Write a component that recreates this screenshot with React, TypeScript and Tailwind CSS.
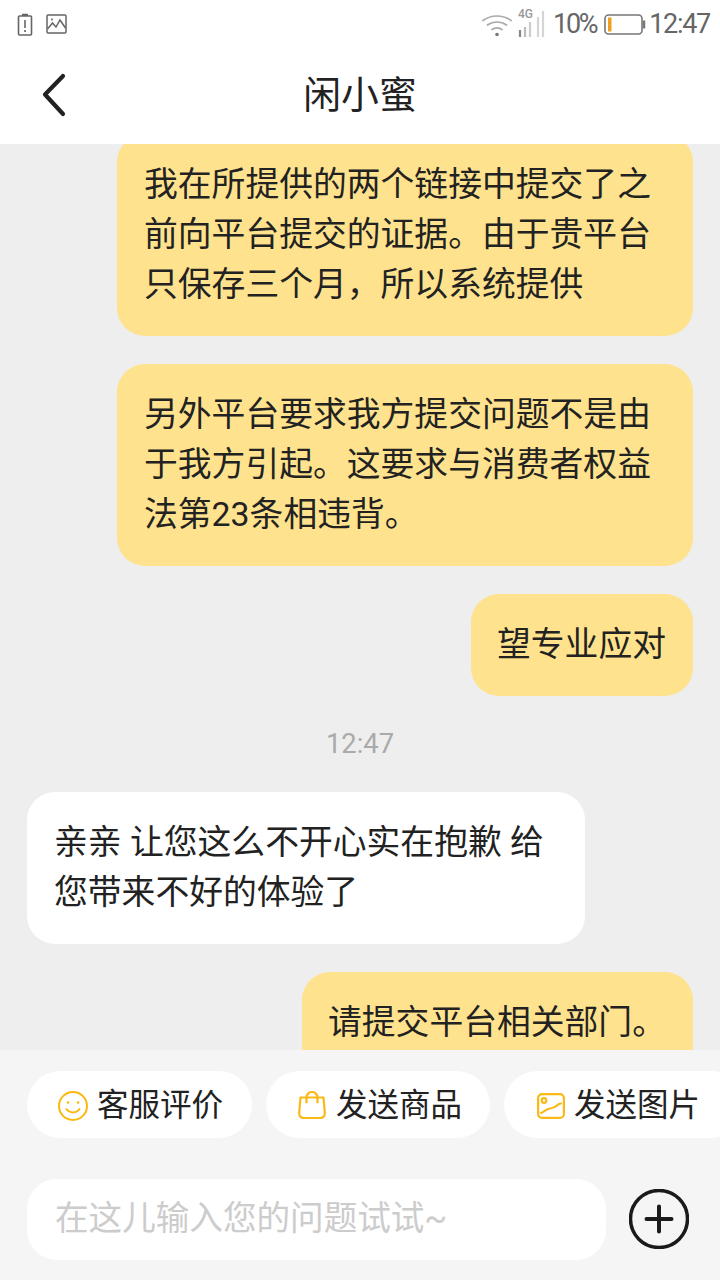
import React from "react";

const font = { fontFamily: 'Roboto, "Noto Sans CJK SC", sans-serif' };

function Mine({ lines, className }: { lines: string[]; className: string }) {
  return (
    <div className="flex justify-end pr-[27px]">
      <div className={"rounded-[28px] bg-[#ffe28d] py-[26px] text-[33.8px] leading-[50px] text-[#222222] " + className}>
        {lines.map((l) => (
          <div key={l} className="whitespace-nowrap">{l}</div>
        ))}
      </div>
    </div>
  );
}

function Chip({ icon, label, className }: { icon: React.ReactNode; label: string; className: string }) {
  return (
    <div className={"flex h-[67px] shrink-0 items-center rounded-[34px] bg-white pt-[2px] text-[31.5px] text-[#222222] " + className}>
      {icon}
      <span className="whitespace-nowrap">{label}</span>
    </div>
  );
}

export default function App() {
  return (
    <div className="flex h-[1280px] w-[720px] flex-col overflow-hidden bg-[#eeeeee]" style={font}>
      <div className="relative z-10 shrink-0 bg-white">
        <div className="flex h-[48px] items-center justify-between pl-[17px] pr-[10px]">
          <div className="flex items-center gap-[13px]">
            <svg width="16" height="23" viewBox="0 0 16 23" fill="none" stroke="#666" strokeWidth="1.6">
              <path d="M5 1.500h6M2.500 3h11a1 1 0 0 1 1 1v17a1 1 0 0 1-1 1h-11a1 1 0 0 1-1-1V4a1 1 0 0 1 1-1z" />
              <path d="M8 7v8M8 17v2" />
            </svg>
            <svg width="21" height="20" viewBox="0 0 21 20" fill="none" stroke="#666" strokeWidth="1.5">
              <rect x="1" y="1" width="19" height="18" rx="1" />
              <path d="M1.500 15l5-6 3.500 4 4-7 5.500 8" />
              <circle cx="6" cy="5.500" r="1" fill="#666" stroke="none" />
            </svg>
          </div>
          <div className="flex items-center text-[27px] leading-none tracking-[-1.300px] text-[#666666]">
            <svg width="30" height="23" viewBox="0 0 30 23" fill="none" stroke="#aaa" strokeWidth="1.7" strokeLinecap="round" className="mr-[6px] mt-[2px]">
              <path d="M1 6.500C9 .5 21 .5 29 6.500" />
              <path d="M5.500 11C11 7 19 7 24.500 11" />
              <path d="M10 15.500c3-2 7-2 10 0" />
              <circle cx="15" cy="20.500" r="1.800" fill="#777" stroke="none" />
            </svg>
            <div className="relative mr-[7px] h-[26px] w-[28px]">
              <span className="absolute left-0 top-[-3px] text-[12px] font-medium tracking-normal text-[#999999]">4G</span>
              <svg width="28" height="26" viewBox="0 0 28 26" fill="none" strokeWidth="2.200" className="absolute left-0 top-0">
                <path d="M2 26v-7" stroke="#888" />
                <path d="M7 26V16" stroke="#bbb" />
                <path d="M12 26V11" stroke="#ccc" />
                <path d="M20 26V6" stroke="#d5d5d5" />
                <path d="M25 26V0" stroke="#d5d5d5" />
              </svg>
            </div>
            <span className="tracking-[-2.300px]">10%</span>
            <svg width="42" height="21" viewBox="0 0 42 21" fill="none" className="ml-[8px] mr-[3px]">
              <rect x="1" y="1" width="37" height="19" rx="3.500" stroke="#777" strokeWidth="1.600" />
              <rect x="4" y="3.500" width="3.500" height="14" fill="#f0a020" />
              <path d="M40 6.500v8" stroke="#777" strokeWidth="2.500" />
            </svg>
            <span>12:47</span>
          </div>
        </div>
        <div className="relative flex h-[96px] items-center justify-center">
          <svg width="26" height="44" viewBox="0 0 26 44" fill="none" stroke="#222" strokeWidth="4.200" strokeLinecap="round" strokeLinejoin="round" className="absolute left-[42px] top-[25px]">
            <path d="M21 3L3 21.500l18 19.500" />
          </svg>
          <span className="text-[37.8px] leading-none text-[#222222]">闲小蜜</span>
        </div>
      </div>

      <div className="min-h-0 flex-1 overflow-hidden">
        <div className="mt-[-10px] flex flex-col gap-[28px]">
          <Mine className="w-[576px] pl-[27px]" lines={["我在所提供的两个链接中提交了之", "前向平台提交的证据。由于贵平台", "只保存三个月，所以系统提供"]} />
          <Mine className="w-[576px] pl-[27px]" lines={["另外平台要求我方提交问题不是由", "于我方引起。这要求与消费者权益", "法第23条相违背。"]} />
          <Mine className="w-[222px] pl-[26px]" lines={["望专业应对"]} />
          <div className="mt-[5px] text-center text-[27.3px] leading-[30px] text-[#aaaaaa]">12:47</div>
          <div className="mt-[5px] flex pl-[27px]">
            <div className="w-[558px] rounded-[28px] bg-white py-[26px] pl-[27px] text-[33.8px] leading-[50px] text-[#222222]">
              <div className="whitespace-nowrap">亲亲 让您这么不开心实在抱歉 给</div>
              <div className="whitespace-nowrap">您带来不好的体验了</div>
            </div>
          </div>
          <Mine className="w-[391px] pl-[26px]" lines={["请提交平台相关部门。"]} />
        </div>
      </div>

      <div className="h-[230px] shrink-0 bg-[#f5f5f5] pt-[21px]">
        <div className="flex gap-[14px] pl-[27px]">
          <Chip
            className="w-[225px] pl-[31px]"
            label="客服评价"
            icon={
              <svg width="30" height="30" viewBox="0 0 30 30" fill="none" stroke="#fbb80f" strokeWidth="2" strokeLinecap="round" className="mr-[9px]">
                <circle cx="15" cy="15" r="14" />
                <path d="M8.500 18c3 4.500 10 4.500 13 0" />
                <circle cx="10" cy="11.500" r="1.300" fill="#fbb80f" stroke="none" />
                <circle cx="20" cy="11.500" r="1.300" fill="#fbb80f" stroke="none" />
              </svg>
            }
          />
          <Chip
            className="w-[224px] pl-[32px]"
            label="发送商品"
            icon={
              <svg width="28" height="28" viewBox="0 0 28 28" fill="none" stroke="#fbb916" strokeWidth="2.200" strokeLinecap="round" strokeLinejoin="round" className="mr-[10px] mt-[-1px]">
                <path d="M2.500 6.500h23l1.300 15.500a4.500 4.500 0 0 1-4.500 5H5.700a4.500 4.500 0 0 1-4.500-5z" />
                <path d="M8.500 11.500V6.500a5.500 5.500 0 0 1 11 0v5" />
              </svg>
            }
          />
          <Chip
            className="w-[240px] pl-[33px]"
            label="发送图片"
            icon={
              <svg width="28" height="26" viewBox="0 0 28 26" fill="none" stroke="#fbb916" strokeWidth="2.200" strokeLinecap="round" className="mr-[9px]">
                <rect x="1.100" y="1.100" width="25.800" height="23.800" rx="4" />
                <circle cx="7" cy="7.500" r="2.300" />
                <path d="M4 20c3-1 5-4 9-4.500s5-1 7-3 3-2 4-2" />
              </svg>
            }
          />
        </div>
        <div className="mt-[41px] flex items-center pl-[27px]">
          <div className="flex h-[81px] w-[579px] items-center rounded-[30px] bg-white pl-[28px] text-[33.6px] text-[#cccccc]">
            在这儿输入您的问题试试~
          </div>
          <svg width="60" height="60" viewBox="0 0 60 60" fill="none" stroke="#1a1a1a" strokeLinecap="round" className="mb-[1px] ml-[23px]">
            <circle cx="30" cy="30" r="28.500" strokeWidth="3.500" />
            <path d="M17.500 30h25M30 17.500v25" strokeWidth="4" />
          </svg>
        </div>
      </div>
    </div>
  );
}
